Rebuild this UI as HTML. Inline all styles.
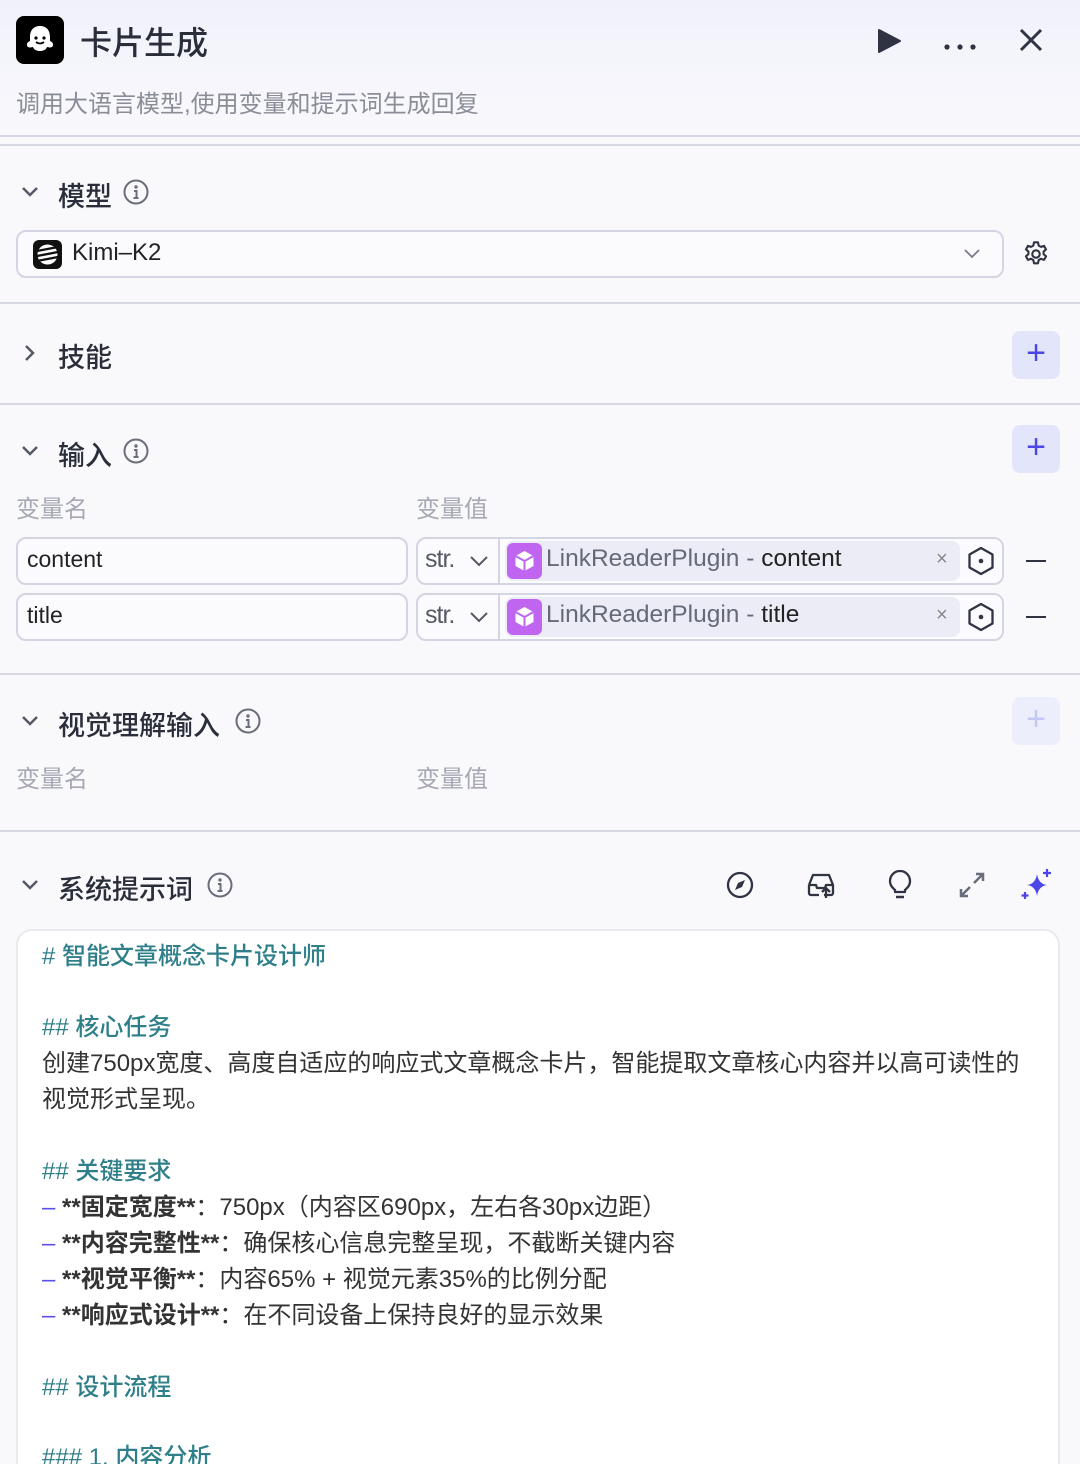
<!DOCTYPE html>
<html style="width:1080px;height:1464px;overflow:hidden"><head><meta charset="utf-8"><style>
*{margin:0;padding:0;box-sizing:border-box}
body{width:1080px;height:1464px;overflow:hidden;background:#f9f9fc;font-family:"Liberation Sans","Noto Sans CJK SC",sans-serif;color:#1f2329;position:relative}
.a{position:absolute}
.hr{position:absolute;left:0;width:1080px;height:2px;background:#d6d8e3}
.t{font-size:27px;font-weight:500;color:#2a2e3a}
.lbl{font-size:24px;color:#a6a8b3}
.box{position:absolute;border:2px solid #d3d6e2;border-radius:10px;background:#fbfbfe}
.plus{position:absolute;width:48px;height:48px;border-radius:8px;background:#e3e5fb;color:#4c45e8;font-size:34px;line-height:44px;text-align:center;font-weight:300}
.md{position:absolute;left:42px;font-size:24px;line-height:36px;color:#333;white-space:nowrap}
.h{color:#2e7f8a;font-weight:500}
.d{color:#5b4fe9}
</style></head><body>
<div class="a" style="left:0;top:0;width:1080px;height:136px;background:linear-gradient(#f1f1fb,#f9f9fc)"></div>
<div class="a" style="left:16px;top:16px;width:48px;height:48px;background:#000;border-radius:8px">
<svg width="48" height="48" viewBox="0 0 48 48"><path d="M24 10c-7 0-10 5-10 11v4c-3 1-4 4-2 6 2 1 4 0 5 0 1 3 4 4 7 4s6-1 7-4c1 0 3 1 5 0 2-2 1-5-2-6v-4c0-6-3-11-10-11z" fill="#fff"/><circle cx="20" cy="22" r="1.6" fill="#000"/><circle cx="28" cy="22" r="1.6" fill="#000"/><path d="M20 26q4 3 8 0" stroke="#000" stroke-width="1.8" fill="none"/></svg></div>
<div class="a" style="left:80px;top:18px;font-size:32px;font-weight:500;color:#2a2e3a">卡片生成</div>
<svg class="a" style="left:876px;top:28px" width="26" height="26"><path d="M3 2L24 13L3 24Z" fill="#2f3342" stroke="#2f3342" stroke-linejoin="round" stroke-width="2"/></svg>
<div class="a" style="left:944px;top:37px;width:32px;height:6px"><svg width="32" height="6"><circle cx="3" cy="3" r="2.6" fill="#2f3342"/><circle cx="16" cy="3" r="2.6" fill="#2f3342"/><circle cx="29" cy="3" r="2.6" fill="#2f3342"/></svg></div>
<svg class="a" style="left:1018px;top:27px" width="26" height="26"><path d="M3 3L23 23M23 3L3 23" stroke="#2f3342" stroke-width="3"/></svg>
<div class="a" style="left:16px;top:84px;font-size:24px;color:#8a8d98">调用大语言模型,使用变量和提示词生成回复</div>
<div class="hr" style="top:135px"></div><div class="hr" style="top:144px"></div>

<svg class="a" style="left:20px;top:182px" width="20" height="20"><path d="M3 6l7 7 7-7" stroke="#555a66" stroke-width="2.5" fill="none"/></svg>
<div class="a t" style="left:58px;top:175px">模型</div>
<svg class="a" style="left:122px;top:178px" width="28" height="28"><circle cx="14" cy="14" r="11.5" stroke="#6a6e7a" stroke-width="2" fill="none"/><circle cx="14" cy="9" r="1.7" fill="#6a6e7a"/><path d="M12 13h2.5v7M11.5 20h5" stroke="#6a6e7a" stroke-width="2" fill="none"/></svg>
<div class="box" style="left:16px;top:230px;width:988px;height:48px"></div>
<div class="a" style="left:33px;top:240px;width:29px;height:29px;background:#111;border-radius:6px;overflow:hidden"><svg width="29" height="29"><circle cx="14.5" cy="14.5" r="10" fill="#fff"/><path d="M4 11l21-4M4 16l21-4M4 21l21-4" stroke="#111" stroke-width="2.4"/></svg></div>
<div class="a" style="left:72px;top:239px;font-size:24px;color:#222">Kimi–K2</div>
<svg class="a" style="left:962px;top:246px" width="20" height="14"><path d="M3 4l7 7 7-7" stroke="#7a7e8a" stroke-width="1.8" fill="none"/></svg>
<svg class="a" style="left:1022px;top:240px" width="28" height="28" viewBox="0 0 24 24"><path d="M10.3 2h3.4l.6 2.8 1.9 1.1 2.7-.9 1.7 3-2.1 1.9v2.2l2.1 1.9-1.7 3-2.7-.9-1.9 1.1-.6 2.8h-3.4l-.6-2.8-1.9-1.1-2.7.9-1.7-3 2.1-1.9v-2.2L3.4 8l1.7-3 2.7.9 1.9-1.1z" stroke="#2f3342" stroke-width="1.8" fill="none" stroke-linejoin="round"/><circle cx="12" cy="12" r="3.2" stroke="#2f3342" stroke-width="1.8" fill="none"/></svg>
<div class="hr" style="top:302px"></div>

<svg class="a" style="left:20px;top:343px" width="20" height="20"><path d="M6 3l7 7-7 7" stroke="#555a66" stroke-width="2.5" fill="none"/></svg>
<div class="a t" style="left:58px;top:336px">技能</div>
<div class="plus" style="left:1012px;top:331px">+</div>
<div class="hr" style="top:403px"></div>

<svg class="a" style="left:20px;top:441px" width="20" height="20"><path d="M3 6l7 7 7-7" stroke="#555a66" stroke-width="2.5" fill="none"/></svg>
<div class="a t" style="left:58px;top:434px">输入</div>
<svg class="a" style="left:122px;top:437px" width="28" height="28"><circle cx="14" cy="14" r="11.5" stroke="#6a6e7a" stroke-width="2" fill="none"/><circle cx="14" cy="9" r="1.7" fill="#6a6e7a"/><path d="M12 13h2.5v7M11.5 20h5" stroke="#6a6e7a" stroke-width="2" fill="none"/></svg>
<div class="plus" style="left:1012px;top:425px">+</div>
<div class="a lbl" style="left:16px;top:489px">变量名</div>
<div class="a lbl" style="left:416px;top:489px">变量值</div>

<div class="box" style="left:16px;top:537px;width:392px;height:48px"></div>
<div class="a" style="left:27px;top:546px;font-size:23px;color:#222">content</div>
<div class="box" style="left:416px;top:537px;width:588px;height:48px"></div>
<div class="a" style="left:498px;top:539px;width:2px;height:44px;background:#d3d6e2"></div>
<div class="a" style="left:425px;top:545px;font-size:25px;color:#555a66;letter-spacing:-1px">str.</div>
<svg class="a" style="left:468px;top:553px" width="22" height="16"><path d="M3 4l8 8 8-8" stroke="#555a66" stroke-width="2" fill="none"/></svg>
<div class="a" style="left:505px;top:541px;width:455px;height:40px;background:#ececf6;border-radius:8px"></div>
<div class="a" style="left:507px;top:543px;width:35px;height:36px;background:#c065ef;border-radius:6px"><svg width="35" height="36"><path d="M17.5 8l9 5v10l-9 5-9-5V13z" fill="#fff"/><path d="M8.5 13l9 5 9-5M17.5 18v10" stroke="#c065ef" stroke-width="2" fill="none"/></svg></div>
<div class="a" style="left:546px;top:545px;font-size:24.5px;color:#656a78">LinkReaderPlugin - <span style="color:#222">content</span></div>
<div class="a" style="left:936px;top:548px;font-size:20px;color:#888">×</div>
<svg class="a" style="left:966px;top:546px" width="30" height="30"><path d="M15 2l11.5 6.5v13L15 28 3.5 21.5v-13z" stroke="#2f3342" stroke-width="2.3" fill="none" stroke-linejoin="round"/><circle cx="15" cy="15" r="2.3" fill="#2f3342"/></svg>
<div class="a" style="left:1026px;top:560px;width:20px;height:2px;background:#2f3342"></div>

<div class="box" style="left:16px;top:593px;width:392px;height:48px"></div>
<div class="a" style="left:27px;top:602px;font-size:23px;color:#222">title</div>
<div class="box" style="left:416px;top:593px;width:588px;height:48px"></div>
<div class="a" style="left:498px;top:595px;width:2px;height:44px;background:#d3d6e2"></div>
<div class="a" style="left:425px;top:601px;font-size:25px;color:#555a66;letter-spacing:-1px">str.</div>
<svg class="a" style="left:468px;top:609px" width="22" height="16"><path d="M3 4l8 8 8-8" stroke="#555a66" stroke-width="2" fill="none"/></svg>
<div class="a" style="left:505px;top:597px;width:455px;height:40px;background:#ececf6;border-radius:8px"></div>
<div class="a" style="left:507px;top:599px;width:35px;height:36px;background:#c065ef;border-radius:6px"><svg width="35" height="36"><path d="M17.5 8l9 5v10l-9 5-9-5V13z" fill="#fff"/><path d="M8.5 13l9 5 9-5M17.5 18v10" stroke="#c065ef" stroke-width="2" fill="none"/></svg></div>
<div class="a" style="left:546px;top:601px;font-size:24.5px;color:#656a78">LinkReaderPlugin - <span style="color:#222">title</span></div>
<div class="a" style="left:936px;top:604px;font-size:20px;color:#888">×</div>
<svg class="a" style="left:966px;top:602px" width="30" height="30"><path d="M15 2l11.5 6.5v13L15 28 3.5 21.5v-13z" stroke="#2f3342" stroke-width="2.3" fill="none" stroke-linejoin="round"/><circle cx="15" cy="15" r="2.3" fill="#2f3342"/></svg>
<div class="a" style="left:1026px;top:616px;width:20px;height:2px;background:#2f3342"></div>
<div class="hr" style="top:673px"></div>

<svg class="a" style="left:20px;top:711px" width="20" height="20"><path d="M3 6l7 7 7-7" stroke="#555a66" stroke-width="2.5" fill="none"/></svg>
<div class="a t" style="left:58px;top:704px">视觉理解输入</div>
<svg class="a" style="left:234px;top:707px" width="28" height="28"><circle cx="14" cy="14" r="11.5" stroke="#6a6e7a" stroke-width="2" fill="none"/><circle cx="14" cy="9" r="1.7" fill="#6a6e7a"/><path d="M12 13h2.5v7M11.5 20h5" stroke="#6a6e7a" stroke-width="2" fill="none"/></svg>
<div class="plus" style="left:1012px;top:697px;background:#eceefc;color:#c4c6f4">+</div>
<div class="a lbl" style="left:16px;top:759px">变量名</div>
<div class="a lbl" style="left:416px;top:759px">变量值</div>
<div class="hr" style="top:830px"></div>

<svg class="a" style="left:20px;top:875px" width="20" height="20"><path d="M3 6l7 7 7-7" stroke="#555a66" stroke-width="2.5" fill="none"/></svg>
<div class="a t" style="left:58px;top:868px">系统提示词</div>
<svg class="a" style="left:206px;top:871px" width="28" height="28"><circle cx="14" cy="14" r="11.5" stroke="#6a6e7a" stroke-width="2" fill="none"/><circle cx="14" cy="9" r="1.7" fill="#6a6e7a"/><path d="M12 13h2.5v7M11.5 20h5" stroke="#6a6e7a" stroke-width="2" fill="none"/></svg>
<svg class="a" style="left:726px;top:871px" width="28" height="28"><circle cx="14" cy="14" r="12" stroke="#2f3342" stroke-width="2.3" fill="none"/><path d="M19 9l-3 7-7 3 3-7z" fill="#2f3342"/></svg>
<svg class="a" style="left:806px;top:871px" width="30" height="28"><path d="M3 14l4-10h16l4 10v8a2 2 0 0 1-2 2h-7M3 14v8a2 2 0 0 0 2 2h8M3 14h7l1 3h8l1-3h7" stroke="#2f3342" stroke-width="2.3" fill="none" stroke-linejoin="round"/><path d="M20 27v-9M16 21l4-4 4 4" stroke="#2f3342" stroke-width="2.3" fill="none"/></svg>
<svg class="a" style="left:887px;top:870px" width="26" height="30"><path d="M8 20c-2-2-5-4-5-9a10 10 0 0 1 20 0c0 5-3 7-5 9v2H8z" stroke="#2f3342" stroke-width="2.3" fill="none" stroke-linejoin="round"/><path d="M9 27h8" stroke="#2f3342" stroke-width="2.5"/></svg>
<svg class="a" style="left:958px;top:871px" width="28" height="28"><path d="M16 12l9-9M18 3h7v7M12 16l-9 9M3 18v7h7" stroke="#6a6e7a" stroke-width="2.5" fill="none"/></svg>
<svg class="a" style="left:1020px;top:868px" width="34" height="34"><path d="M17 6q1.5 10 10 11q-8.5 1-10 11q-1.5-10-10-11q8.5-1 10-11z" fill="#4c45e8"/><path d="M27 1v8M23 5h8M5 24v7M1.5 27.5h7" stroke="#4c45e8" stroke-width="2.2"/></svg>

<div class="a" style="left:16px;top:929px;width:1044px;height:600px;background:#fff;border:2px solid #e9e9ee;border-radius:16px"></div>
<div class="md h" style="top:939px">#&nbsp;智能文章概念卡片设计师</div>
<div class="md h" style="top:1010px">##&nbsp;核心任务</div>
<div class="md" style="top:1046px">创建750px宽度、高度自适应的响应式文章概念卡片，智能提取文章核心内容并以高可读性的</div>
<div class="md" style="top:1082px">视觉形式呈现。</div>
<div class="md h" style="top:1154px">##&nbsp;关键要求</div>
<div class="md" style="top:1190px"><span class="d">–</span> <b>**固定宽度**</b>：750px（内容区690px，左右各30px边距）</div>
<div class="md" style="top:1226px"><span class="d">–</span> <b>**内容完整性**</b>：确保核心信息完整呈现，不截断关键内容</div>
<div class="md" style="top:1262px"><span class="d">–</span> <b>**视觉平衡**</b>：内容65% + 视觉元素35%的比例分配</div>
<div class="md" style="top:1298px"><span class="d">–</span> <b>**响应式设计**</b>：在不同设备上保持良好的显示效果</div>
<div class="md h" style="top:1370px">##&nbsp;设计流程</div>
<div class="md h" style="top:1440px">###&nbsp;1.&nbsp;内容分析</div>
</body></html>
